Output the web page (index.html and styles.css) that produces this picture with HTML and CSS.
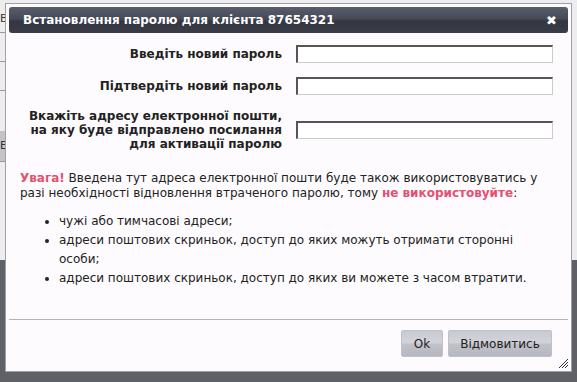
FILE: index.html
```html
<!DOCTYPE html>
<html lang="uk">
<head>
    <meta charset="UTF-8">
    <title>Встановлення паролю</title>
    <link rel="stylesheet" href="styles.css">
</head>
<body>
    <div class="page">
        <div class="page-item">В</div>
        <div class="page-item"></div>
        <div class="page-item"></div>
        <div class="page-item dark">Е</div>
    </div>

    <div class="dialog">
        <div class="dialog-title">
            <span>Встановлення паролю для клієнта 87654321</span>
            <span class="close">&#10006;</span>
        </div>
        <div class="dialog-body">
            <div class="form">
                <label>Введіть новий пароль</label>
                <input type="password">
                <label>Підтвердіть новий пароль</label>
                <input type="password">
                <label>Вкажіть адресу електронної пошти,<br>на яку буде відправлено посилання<br>для активації паролю</label>
                <input type="text">
            </div>
            <p class="warning">
                <b class="red">Увага!</b> Введена тут адреса електронної пошти буде також використовуватись у
                разі необхідності відновлення втраченого паролю, тому <b class="red">не використовуйте</b>:
            </p>
            <ul class="rules">
                <li>чужі або тимчасові адреси;</li>
                <li>адреси поштових скриньок, доступ до яких можуть отримати сторонні особи;</li>
                <li>адреси поштових скриньок, доступ до яких ви можете з часом втратити.</li>
            </ul>
        </div>
        <div class="dialog-footer">
            <button class="btn btn-ok">Ok</button>
            <button class="btn btn-cancel">Відмовитись</button>
        </div>
        <svg class="grip" width="10" height="10" viewBox="0 0 10 10">
            <path d="M1 10 L10 1 M4 10 L10 4 M7 10 L10 7" stroke="#333" stroke-width="1"/>
        </svg>
    </div>
</body>
</html>
```

FILE: styles.css
```css
body {
    margin: 0;
    height: 382px;
    overflow: hidden;
    font-family: "DejaVu Sans", Verdana, sans-serif;
    background: linear-gradient(to bottom, #ededf0 0, #ededf0 260px, #606067 260px);
}
.page {
    width: 5px;
    overflow: hidden;
    padding-top: 12px;
}
.page-item {
    height: 20px;
    border-bottom: 1px solid #9a9a9a;
    font-size: 11px;
    color: #333;
    margin-bottom: 8px;
}
.page-item.dark {
    background: #c4c4c8;
    height: 30px;
    line-height: 30px;
    margin-top: 40px;
}

.dialog {
    position: absolute;
    left: 5px;
    top: 3px;
    width: 567px;
    height: 369px;
    box-sizing: border-box;
    padding: 3px;
    background: #fdfbfd;
    border: 1px solid #a0a0a4;
    display: flex;
    flex-direction: column;
}
.dialog-title {
    height: 26px;
    flex: none;
    display: flex;
    justify-content: space-between;
    align-items: center;
    padding: 0 11px 0 14px;
    border-radius: 3px;
    background: linear-gradient(to bottom, #5a5d6b 0%, #464956 45%, #343642 55%, #3a3c48 100%);
    color: #fff;
    font-weight: bold;
    font-size: 12px;
}
.close {
    font-size: 13px;
}
.dialog-body {
    flex: 1;
    padding: 12px 15px 0 11px;
}
.form {
    display: grid;
    grid-template-columns: 262px 257px;
    column-gap: 14px;
    row-gap: 14px;
    align-items: center;
}
.form label {
    text-align: right;
    font-weight: bold;
    font-size: 12px;
    line-height: 14px;
    color: #222;
}
.form input {
    height: 18px;
    box-sizing: border-box;
    margin: 0;
    border: 1px solid;
    border-color: #555 #ccc #ccc #555;
    border-width: 2px 1px 1px 2px;
    background: #fff;
}
.warning {
    margin: 20px 0 0;
    font-size: 12px;
    line-height: 15px;
    color: #222;
}
.red {
    color: #e4506f;
}
.rules {
    margin: 11px 0 0;
    padding-left: 39px;
    font-size: 12px;
    line-height: 19px;
    color: #222;
}
.dialog-footer {
    flex: none;
    height: 49px;
    box-sizing: border-box;
    border-top: 1px solid #b4b4b4;
    padding: 10px 16px 0 0;
    display: flex;
    justify-content: flex-end;
    align-items: flex-start;
    gap: 5px;
}
.btn {
    height: 27px;
    padding: 0;
    border: 1px solid #c0c1c8;
    border-radius: 2px;
    font-family: "DejaVu Sans", Verdana, sans-serif;
    font-size: 12px;
    color: #222;
    background: linear-gradient(to bottom, #c9cad2 0%, #d3d4da 45%, #bfc0c8 55%, #b6b7c0 100%);
}
.btn-ok {
    width: 42px;
}
.btn-cancel {
    width: 104px;
}
.grip {
    position: absolute;
    right: 3px;
    bottom: 3px;
}
```
